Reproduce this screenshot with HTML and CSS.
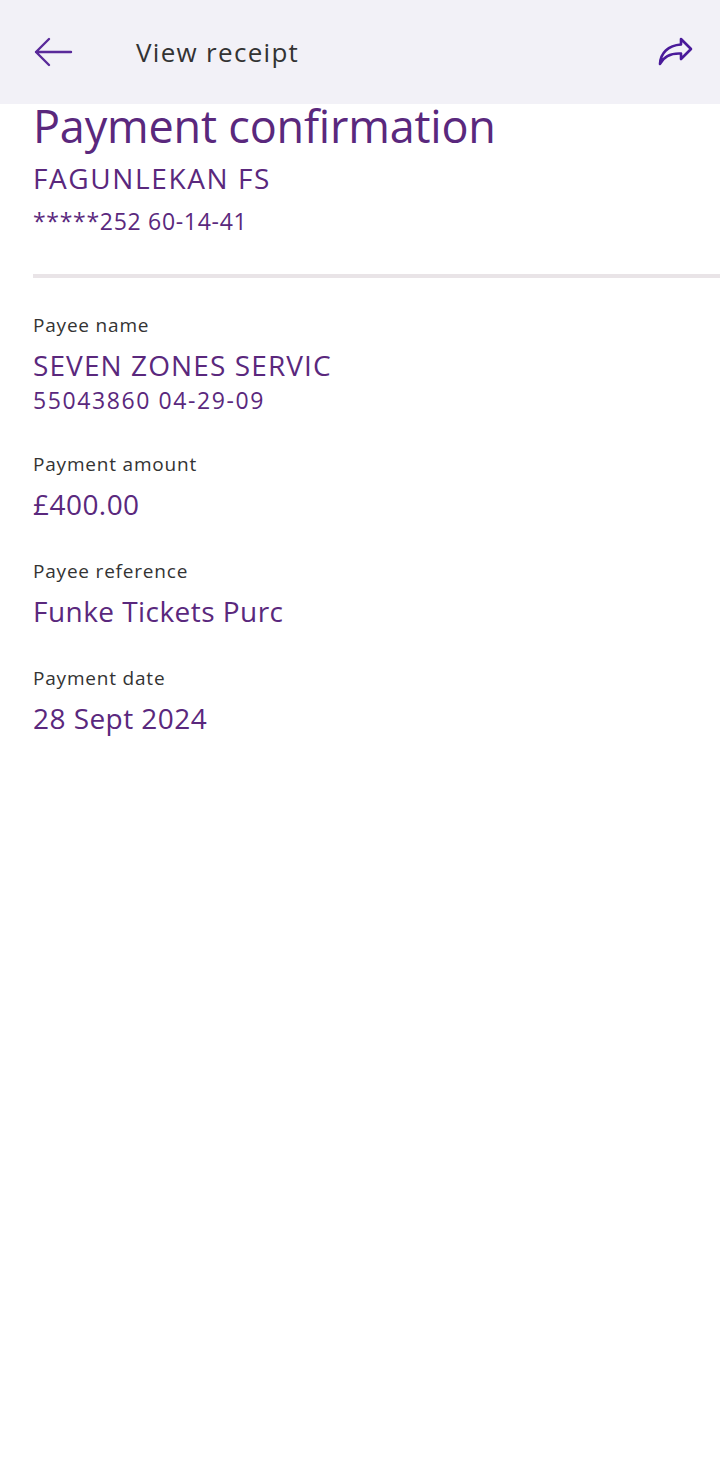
FILE: index.html
```html
<!DOCTYPE html>
<html>
<head>
<meta charset="utf-8">
<link rel="stylesheet" href="styles.css">
</head>
<body>
<header class="topbar">
  <button class="icon-btn back" aria-label="Back">
    <svg width="40" height="32" viewBox="0 0 40 32"><path d="M38 16H3M16 3L3 16l13 13" fill="none" stroke="#5a2a9a" stroke-width="2.4" stroke-linecap="round" stroke-linejoin="round"/></svg>
  </button>
  <h1 class="title">View receipt</h1>
  <button class="icon-btn share" aria-label="Share">
    <svg width="38" height="32" viewBox="0 0 38 32"><path d="M25 3l10 10-10 10v-5.5C15 17 8 20 4 28 4.5 17 12 9.5 25 8.5Z" fill="none" stroke="#4a1a9a" stroke-width="2.6" stroke-linejoin="round"/></svg>
  </button>
</header>
<main class="content">
  <section class="summary">
    <h2 class="heading">Payment confirmation</h2>
    <div class="account-name">FAGUNLEKAN FS</div>
    <div class="account-num">*****252 60-14-41</div>
  </section>
  <hr class="divider">
  <section class="details">
    <div class="field">
      <div class="label">Payee name</div>
      <div class="value caps">SEVEN ZONES SERVIC</div>
      <div class="sub">55043860 04-29-09</div>
    </div>
    <div class="field">
      <div class="label">Payment amount</div>
      <div class="value">£400.00</div>
    </div>
    <div class="field">
      <div class="label">Payee reference</div>
      <div class="value">Funke Tickets Purc</div>
    </div>
    <div class="field">
      <div class="label">Payment date</div>
      <div class="value">28 Sept 2024</div>
    </div>
  </section>
</main>
</body>
</html>
```
FILE: styles.css
```css
* { box-sizing: border-box; }
html, body { margin: 0; padding: 0; background: #ffffff; }
body { font-family: "Open Sans", "Noto Sans", sans-serif; color: #5a287d; width: 720px; }
.topbar {
  height: 104px;
  background: #f2f1f7;
  display: flex;
  align-items: center;
  padding: 0 26px 0 33px;
}
.icon-btn { background: none; border: 0; padding: 0; display: flex; cursor: pointer; }
.back { margin-right: 63px; }
.title {
  margin: 0;
  flex: 1;
  font-size: 26px;
  font-weight: 400;
  color: #333333;
  letter-spacing: 1.3px;
}
.content { padding: 0 0 0 33px; }
.heading {
  margin: -6px 0 0 0;
  font-size: 45px;
  font-weight: 400;
  line-height: 56px;
  letter-spacing: -0.2px;
}
.account-name { font-size: 28px; line-height: 40px; margin-top: 4px; letter-spacing: 1.6px; }
.account-num { font-size: 23px; line-height: 36px; margin-top: 5px; letter-spacing: 0.7px; }
.divider {
  margin: 35px 0 0 0;
  border: 0;
  height: 4px;
  background: #e9e4e7;
}
.details { padding-top: 34px; display: flex; flex-direction: column; gap: 35px; }
.label { font-size: 19px; line-height: 26px; color: #333333; letter-spacing: 0.8px; }
.value { font-size: 28px; line-height: 38px; margin-top: 8px; letter-spacing: 0.45px; }
.value.caps { letter-spacing: 1.1px; }
.sub { font-size: 23px; line-height: 32px; letter-spacing: 1.6px; }
```
